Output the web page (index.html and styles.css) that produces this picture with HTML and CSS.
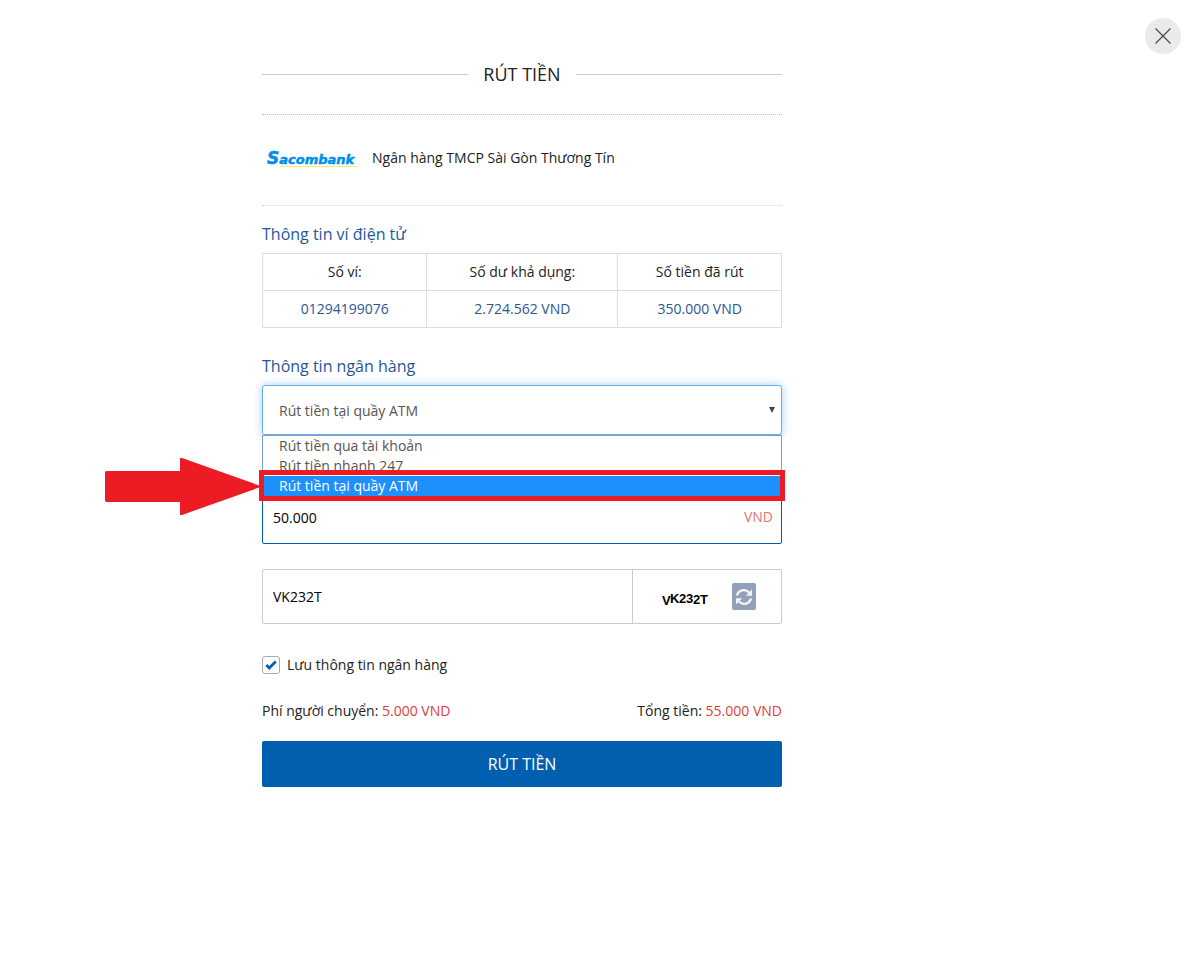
FILE: index.html
```html
<!DOCTYPE html>
<html lang="vi">
<head>
    <meta charset="UTF-8">
    <meta name="viewport" content="width=device-width, initial-scale=1">
    <title>Rút tiền</title>
    <link rel="stylesheet" href="styles.css">
</head>
<body>
    <button type="button" class="close" aria-label="Đóng">
        <svg width="16" height="16" viewBox="0 0 16 16" fill="none" stroke="#444" stroke-width="1.1">
            <path d="M.5.5l15 15M15.5.5l-15 15"/>
        </svg>
    </button>

    <form class="withdraw">
        <h1>RÚT TIỀN</h1>

        <div class="bank">
            <svg class="bank-logo" width="92" height="20" viewBox="0 0 92 20" role="img" aria-label="Sacombank">
                <path d="M13 18.500h77" stroke="#ffe95c"/>
                <text x="0" y="16" class="logo-text"><tspan class="logo-cap">S</tspan>acombank</text>
            </svg>
            <span>Ngân hàng TMCP Sài Gòn Thương Tín</span>
        </div>

        <h2>Thông tin ví điện tử</h2>
        <table class="wallet">
            <thead>
                <tr>
                    <th>Số ví:</th>
                    <th class="balance">Số dư khả dụng:</th>
                    <th>Số tiền đã rút</th>
                </tr>
            </thead>
            <tbody>
                <tr>
                    <td>01294199076</td>
                    <td>2.724.562 VND</td>
                    <td>350.000 VND</td>
                </tr>
            </tbody>
        </table>

        <h2><label for="method">Thông tin ngân hàng</label></h2>
        <div class="method">
            <select id="method">
                <option>Rút tiền qua tài khoản</option>
                <option>Rút tiền nhanh 247</option>
                <option selected>Rút tiền tại quầy ATM</option>
            </select>
            <svg class="caret" width="6" height="6" viewBox="0 0 6 6"><path d="M0 0h6L3 6z" fill="#444"/></svg>
            <ul class="method-list" role="listbox" aria-label="Hình thức rút tiền">
                <li role="option">Rút tiền qua tài khoản</li>
                <li role="option">Rút tiền nhanh 247</li>
                <li role="option" class="active" aria-selected="true">Rút tiền tại quầy ATM</li>
            </ul>
            <div class="highlight"></div>
            <svg class="pointer" width="158" height="58" viewBox="0 0 158 58">
                <path d="M2 13h74V0h2L158 28.500 78 57h-2V44H2l-1-1V14z" fill="#ed1c24"/>
            </svg>
        </div>

        <div class="amount">
            <input type="text" id="amount" value="50.000" aria-label="Số tiền">
            <label for="amount">VND</label>
        </div>

        <div class="captcha">
            <input type="text" value="VK232T" aria-label="Mã xác nhận">
            <div class="captcha-code">
                <svg width="48" height="20" viewBox="0 0 48 20">
                    <text x="0 8 17 24 31 38" y="18 16 16 16 17 17">VK232T</text>
                </svg>
                <button type="button" class="refresh" aria-label="Đổi mã">
                    <svg width="18" height="18" viewBox="0 0 18 18">
                        <path d="M2 7.500C3 2.500 10 0 14 4.500M16 10.500C15 15.500 8 18 4 13.500" fill="none" stroke="#f4f5f7" stroke-width="2.400"/>
                        <path d="M17 1.500v6.200h-6.200zM1 16.500v-6.200h6.200z" fill="#f4f5f7"/>
                    </svg>
                </button>
            </div>
        </div>

        <label class="save">
            <input type="checkbox" checked>
            <svg class="tick" width="12" height="10" viewBox="0 0 12 10"><path d="M1.300 5l3 3L10.700 1.500" fill="none" stroke="#0060af" stroke-width="2.800"/></svg>
            <span>Lưu thông tin ngân hàng</span>
        </label>

        <div class="totals">
            <span>Phí người chuyển: <em>5.000 VND</em></span>
            <span>Tổng tiền: <em>55.000 VND</em></span>
        </div>

        <button type="submit" class="submit">RÚT TIỀN</button>
    </form>
</body>
</html>
```
FILE: styles.css
```css
* {
    box-sizing: border-box;
}

body {
    margin: 0;
    padding: 64px 155px 40px 0;
    background: #fff;
    color: #222;
    font-family: "Open Sans", "Noto Sans", sans-serif;
    font-size: 14px;
    line-height: 20px;
}

input, select, button {
    font: inherit;
    color: inherit;
}

.close {
    position: absolute;
    top: 18px;
    right: 18px;
    display: flex;
    align-items: center;
    justify-content: center;
    width: 36px;
    height: 36px;
    padding: 0;
    border: 0;
    border-radius: 50%;
    background: #eaeaea;
    cursor: pointer;
}

.withdraw {
    width: 100%;
    max-width: 520px;
    margin: 0 auto;
}

h1 {
    display: flex;
    align-items: center;
    gap: 15px;
    margin: 0 0 30px;
    font-size: 18px;
    font-weight: 400;
    line-height: 20px;
}

h1::before,
h1::after {
    content: "";
    flex: 1;
    border-top: 1px solid #ccc;
}

.bank {
    display: flex;
    align-items: center;
    gap: 13px;
    height: 92px;
    padding: 0 5px 4px;
    margin-bottom: 16px;
    border-top: 1px dotted #bbb;
    border-bottom: 1px dotted #d5d5d5;
}

.logo-text {
    fill: #0090e8;
    stroke: #0090e8;
    stroke-width: .5;
    font: italic bold 13px "DejaVu Sans", sans-serif;
}

.logo-cap {
    font-size: 17px;
}

h2 {
    margin: 0 0 7px;
    color: #1f5799;
    font-size: 16px;
    font-weight: 400;
    line-height: 24px;
}

.wallet {
    width: 100%;
    margin-bottom: 26px;
    border-collapse: collapse;
    text-align: center;
}

.wallet th,
.wallet td {
    height: 37px;
    padding: 0;
    border: 1px solid #ddd;
    font-weight: 400;
}

.wallet .balance {
    width: 191px;
}

.wallet td {
    color: #2d5691;
}

.method {
    position: relative;
    margin-bottom: 55px;
}

.method select {
    display: block;
    width: 100%;
    height: 50px;
    padding: 2px 16px 0;
    border: 1px solid #66afe9;
    border-radius: 3px;
    background: #fff;
    color: #555;
    box-shadow: 0 0 8px rgba(102, 175, 233, .6);
    appearance: none;
    outline: none;
}

.caret {
    position: absolute;
    top: 22px;
    right: 7px;
    pointer-events: none;
}

.method-list {
    position: absolute;
    top: 100%;
    left: 0;
    right: 0;
    margin: 0;
    padding: 0;
    border: 1px solid #7a9cd3;
    background: #fff;
    color: #555;
    list-style: none;
    z-index: 1;
}

.method-list li {
    padding: 0 16px;
}

.method-list .active {
    background: #1e90ff;
    color: #fff;
}

/* red frame and arrow over the chosen option */
.highlight {
    position: absolute;
    top: 85px;
    left: -3px;
    right: -3px;
    height: 31px;
    border: 5px solid #ed1c24;
    z-index: 2;
}

.pointer {
    position: absolute;
    top: 73px;
    right: 100%;
    z-index: 2;
}

.amount {
    display: flex;
    align-items: center;
    height: 54px;
    margin-bottom: 25px;
    padding-right: 8px;
    border: 1px solid #0060af;
    border-radius: 2px;
}

.amount label {
    color: #e57373;
}

.amount input,
.captcha input {
    flex: 1;
    min-width: 0;
    height: 100%;
    padding: 0 10px;
    border: 0;
    background: none;
    color: #000;
    outline: none;
}

.captcha {
    display: flex;
    height: 55px;
    margin-bottom: 31px;
    border: 1px solid #ccc;
    border-radius: 2px;
}

.captcha-code {
    display: flex;
    align-items: center;
    justify-content: space-between;
    width: 149px;
    padding: 0 25px 0 29px;
    border-left: 1px solid #ccc;
}

.captcha-code text {
    font: bold 13px "Liberation Sans", Arial, sans-serif;
    fill: #000;
}

.refresh {
    display: flex;
    align-items: center;
    justify-content: center;
    width: 24px;
    height: 27px;
    padding: 0;
    border: 0;
    border-radius: 2px;
    background: #92a1b8;
    cursor: pointer;
}

.save {
    position: relative;
    display: flex;
    align-items: center;
    gap: 7px;
    margin-bottom: 26px;
}

.save input {
    width: 18px;
    height: 18px;
    margin: 0;
    border: 1px solid #aaa;
    border-radius: 3px;
    appearance: none;
}

.tick {
    position: absolute;
    left: 3px;
    top: 5px;
    visibility: hidden;
    pointer-events: none;
}

.save input:checked + .tick {
    visibility: visible;
}

.totals {
    display: flex;
    justify-content: space-between;
    margin-bottom: 20px;
}

.totals em {
    color: #e23c41;
    font-style: normal;
}

.submit {
    display: block;
    width: 100%;
    height: 46px;
    padding: 0;
    border: 0;
    border-radius: 2px;
    background: #0060af;
    color: #fff;
    font-size: 16px;
    cursor: pointer;
}
```
